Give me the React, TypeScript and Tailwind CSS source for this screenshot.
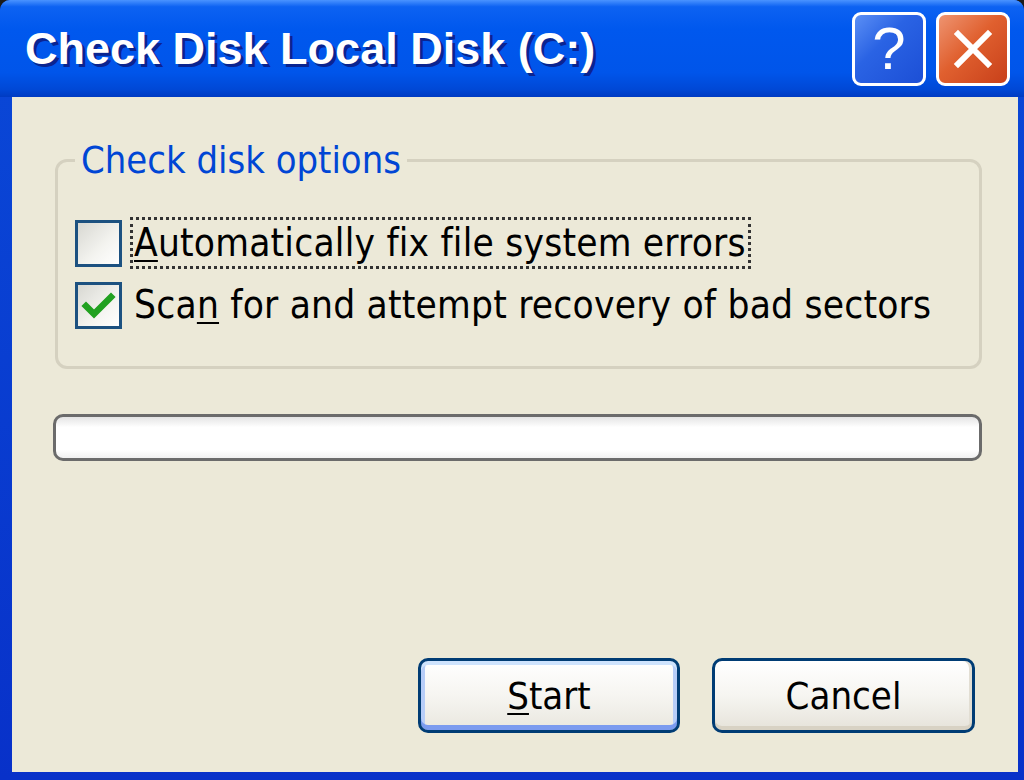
import React from "react";

const bodyFont = { fontFamily: '"DejaVu Sans Condensed", "Liberation Sans", Arial, sans-serif' };

const CheckRow: React.FC<{
  checked?: boolean;
  focused?: boolean;
  children: React.ReactNode;
}> = ({ checked, focused, children }) => (
  <div className="flex items-center h-[52px]">
    <div className="w-[47px] h-[47px] border-[3px] border-[#1c5180] bg-[linear-gradient(135deg,#d8d8d2_0%,#f4f4f0_60%,#ffffff_100%)] flex items-center justify-center">
      {checked && (
        <svg width="41" height="41" viewBox="0 0 41 41">
          <path d="M8 21 L16 29 L33 12" fill="none" stroke="#21a121" strokeWidth="6.5" strokeLinecap="square" />
        </svg>
      )}
    </div>
    <div
      className={`ml-[8px] h-[52px] flex items-center pl-[1px] pr-[2px] border-[3px] border-dotted ${
        focused ? "border-[#333]" : "border-transparent"
      }`}
    >
      <span className="text-[38.5px] tracking-[0.2px] text-black leading-none">{children}</span>
    </div>
  </div>
);

export default function App() {
  return (
    <div className="w-[1024px] h-[780px] bg-[#1b1b1b]" style={bodyFont}>
      <div className="h-full flex flex-col rounded-t-[10px] overflow-hidden bg-[linear-gradient(to_bottom,#0a49d8,#0831c9)]">
        {/* title bar */}
        <div className="h-[97px] shrink-0 flex items-center pl-[25px] pr-[14px] bg-[linear-gradient(to_bottom,#4a93ff_0%,#0d62f2_7%,#0058ee_30%,#0055ea_75%,#0048d6_92%,#003bc2_100%)]">
          <div
            className="flex-1 text-white font-bold text-[45px] leading-none [text-shadow:3px_3px_0_#0a2490]"
            style={{ fontFamily: '"Liberation Sans", Arial, sans-serif' }}
          >
            Check Disk Local Disk (C:)
          </div>
          <div className="flex gap-[10px]">
            <div className="w-[74px] h-[74px] rounded-[9px] border-[3px] border-white bg-[linear-gradient(135deg,#5b8ff5_0%,#2a63e4_40%,#1c4fd6_100%)] flex items-center justify-center">
              <span
                className="text-white text-[60px] leading-none"
                style={{ fontFamily: '"Liberation Sans", Arial, sans-serif' }}
              >
                ?
              </span>
            </div>
            <div className="w-[74px] h-[74px] rounded-[9px] border-[3px] border-white bg-[linear-gradient(135deg,#ee9471_0%,#e0602f_45%,#c8401a_100%)] flex items-center justify-center">
              <svg width="44" height="44" viewBox="0 0 44 44">
                <path d="M7 7 L37 37 M37 7 L7 37" stroke="white" strokeWidth="6" strokeLinecap="square" />
              </svg>
            </div>
          </div>
        </div>

        {/* window body */}
        <div className="flex-1 flex pl-[12px] pr-[6px] pb-[8px]">
          <div className="flex-1 flex flex-col bg-[#ece9d8]">
            <fieldset className="mt-[41px] ml-[43px] mr-[36px] border-[3px] border-[#d5d1c0] rounded-[12px] pl-[17px] pr-[20px] pt-[35px] pb-[35px]">
              <legend className="px-[6px] text-[37.8px] leading-[44px] text-[#0046d5]">
                Check disk options
              </legend>
              <div className="flex flex-col gap-[10px]">
                <CheckRow focused>
                  <span className="underline decoration-2 underline-offset-4">A</span>utomatically fix file system errors
                </CheckRow>
                <CheckRow checked>
                  Sca<span className="underline decoration-2 underline-offset-4">n</span> for and attempt recovery of bad sectors
                </CheckRow>
              </div>
            </fieldset>

            <div className="mt-[45px] ml-[41px] mr-[36px] h-[47px] rounded-[10px] border-[3px] border-[#6b6b6b] bg-[linear-gradient(to_bottom,#e4e4e4_0%,#ffffff_25%,#ffffff_80%,#f0f0f0_100%)]" />

            <div className="mt-auto flex justify-end gap-[32px] pr-[43px] pb-[39px]">
              <button className="w-[262px] h-[75px] rounded-[10px] border-[3px] border-[#003c74] bg-[linear-gradient(to_bottom,#ffffff_0%,#f6f5f1_50%,#e9e7df_100%)] shadow-[inset_0_4px_0_#cee3fd,inset_0_-5px_0_#7b9bef,inset_4px_0_0_#b7cdf8,inset_-4px_0_0_#b7cdf8] flex items-center justify-center">
                <span className="text-[38px] text-black leading-none">
                  <span className="underline decoration-2 underline-offset-4">S</span>tart
                </span>
              </button>
              <button className="w-[263px] h-[75px] rounded-[10px] border-[3px] border-[#003c74] bg-[linear-gradient(to_bottom,#ffffff_0%,#f6f5f1_50%,#e6e3da_100%)] shadow-[inset_0_-4px_0_#d8d2c4,inset_-3px_0_0_#e2ded3] flex items-center justify-center">
                <span className="text-[38px] text-black leading-none">Cancel</span>
              </button>
            </div>
          </div>
        </div>
      </div>
    </div>
  );
}
